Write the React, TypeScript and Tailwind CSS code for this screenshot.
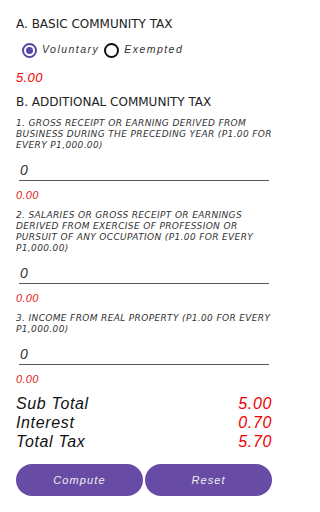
import React from "react"

const items = [
  [
    "1. GROSS RECEIPT OR EARNING DERIVED FROM",
    "BUSINESS DURING THE PRECEDING YEAR (P1.00 FOR",
    "EVERY P1,000.00)",
  ],
  [
    "2. SALARIES OR GROSS RECEIPT OR EARNINGS",
    "DERIVED FROM EXERCISE OF PROFESSION OR",
    "PURSUIT OF ANY OCCUPATION (P1.00 FOR EVERY",
    "P1,000.00)",
  ],
  ["3. INCOME FROM REAL PROPERTY (P1.00 FOR EVERY", "P1,000.00)"],
]

function Radio({ checked, label }: { checked?: boolean; label: string }) {
  return (
    <div className="flex items-center">
      <span
        className={
          checked
            ? "flex h-[15px] w-[15px] items-center justify-center rounded-full border-2 border-[#5a46a8]"
            : "flex h-[15px] w-[15px] items-center justify-center rounded-full border-2 border-[#111]"
        }
      >
        {checked && <span className="h-[7px] w-[7px] rounded-full bg-[#5a46a8]" />}
      </span>
      <span className="ml-[5px] text-[10.5px] italic tracking-[0.14em] text-[#333]">{label}</span>
    </div>
  )
}

function TaxItem({ lines }: { lines: string[] }) {
  return (
    <div>
      <div className="mt-[8px] font-['DejaVu_Sans',sans-serif] text-[9px] italic leading-[11px] tracking-[0.04em] text-[#333]">
        {lines.map((line) => (
          <p key={line} className="whitespace-nowrap">
            {line}
          </p>
        ))}
      </div>
      <div className="mx-[3px] mt-[9px] h-[21px] border-b-[1.5px] border-[#555] text-[14px] italic leading-[20px] text-[#333]">
        <span className="pl-[1px]">0</span>
      </div>
      <p className="mt-[7px] text-[11px] italic leading-[14px] tracking-[0.03em] text-[#e01b1b]">0.00</p>
    </div>
  )
}

export default function App() {
  return (
    <div className="min-h-[512px] w-[288px] bg-white px-4 pt-4 font-['Liberation_Sans',sans-serif]">
      <h2 className="font-['DejaVu_Sans',sans-serif] text-[12px] leading-4 text-[#222]">A. BASIC COMMUNITY TAX</h2>
      <div className="mt-[10px] flex h-4 items-center gap-[5px] pl-[6px]">
        <Radio checked label="Voluntary" />
        <Radio label="Exempted" />
      </div>
      <p className="mt-[11px] text-[13px] italic leading-[18px] tracking-[0.03em] text-[#ee0000]">5.00</p>
      <h2 className="mt-[7px] font-['DejaVu_Sans',sans-serif] text-[12px] leading-4 text-[#222]">
        B. ADDITIONAL COMMUNITY TAX
      </h2>

      {items.map((lines) => (
        <TaxItem key={lines[0]} lines={lines} />
      ))}

      <div className="mt-[8px] text-[16px] italic leading-[19px] tracking-[0.04em]">
        <div className="flex justify-between">
          <span className="text-[#111]">Sub Total</span>
          <span className="text-[#ee0000]">5.00</span>
        </div>
        <div className="flex justify-between">
          <span className="text-[#111]">Interest</span>
          <span className="text-[#ee0000]">0.70</span>
        </div>
        <div className="flex justify-between">
          <span className="text-[#111]">Total Tax</span>
          <span className="text-[#ee0000]">5.70</span>
        </div>
      </div>

      <div className="mt-[13px] flex gap-[2px]">
        <button className="h-8 flex-1 rounded-full bg-[#684ba5] text-[11px] italic tracking-[0.1em] text-[#eee]">
          Compute
        </button>
        <button className="h-8 flex-1 rounded-full bg-[#684ba5] text-[11px] italic tracking-[0.1em] text-[#eee]">
          Reset
        </button>
      </div>
    </div>
  )
}
